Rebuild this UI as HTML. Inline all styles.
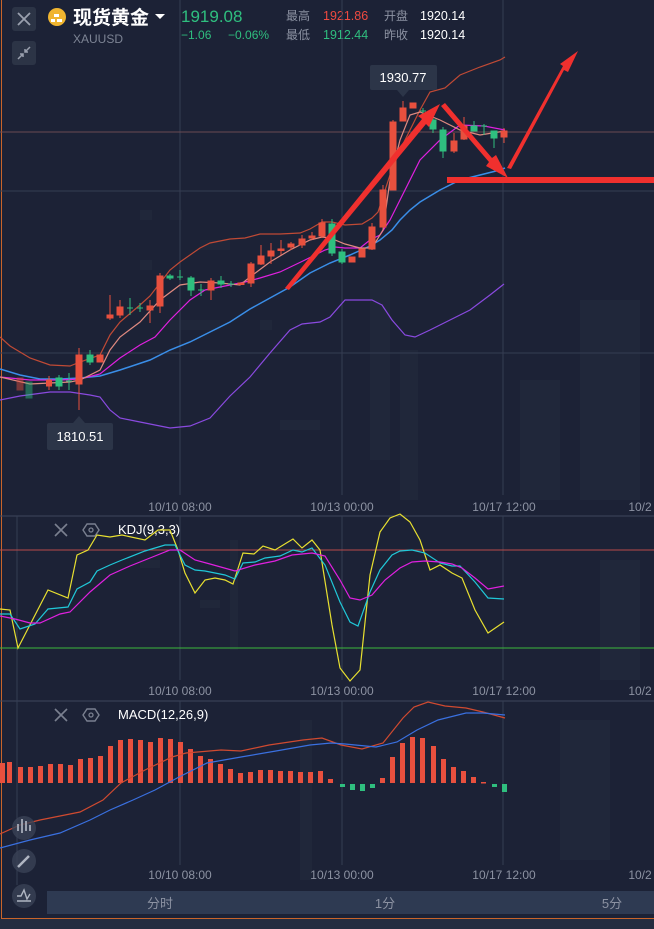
<!DOCTYPE html>
<html><head><meta charset="utf-8"><style>
html,body{margin:0;padding:0;background:#1c2236;}
body{width:654px;height:929px;overflow:hidden;position:relative;font-family:"Liberation Sans","Noto Sans CJK SC",sans-serif;}
svg{position:absolute;left:0;top:0}
</style></head><body>
<svg width="654" height="929" viewBox="0 0 654 929" xmlns="http://www.w3.org/2000/svg" font-family="Liberation Sans, Noto Sans CJK SC, sans-serif">
<rect width="654" height="929" fill="#1c2236"/>
<!-- faint background buildings -->
<g fill="#20273a">
<rect x="140" y="210" width="12" height="10"/><rect x="170" y="210" width="12" height="10"/><rect x="200" y="240" width="30" height="10"/><rect x="140" y="260" width="12" height="10"/><rect x="170" y="320" width="50" height="10"/><rect x="200" y="350" width="30" height="10"/><rect x="260" y="320" width="12" height="10"/><rect x="300" y="280" width="40" height="10"/><rect x="280" y="420" width="40" height="10"/><rect x="370" y="280" width="20" height="180"/><rect x="400" y="350" width="18" height="150"/><rect x="580" y="300" width="60" height="200"/><rect x="520" y="380" width="40" height="120"/>
<rect x="600" y="560" width="40" height="120"/><rect x="140" y="560" width="20" height="8"/><rect x="200" y="600" width="20" height="8"/><rect x="230" y="540" width="8" height="110"/><rect x="300" y="720" width="12" height="160"/><rect x="560" y="720" width="50" height="140"/>
</g>
<!-- orange frame -->
<line x1="1.5" y1="0" x2="1.5" y2="919" stroke="#c8642a" stroke-width="1"/>
<line x1="1" y1="918.5" x2="654" y2="918.5" stroke="#c8642a" stroke-width="1"/>
<rect x="0" y="919" width="654" height="10" fill="#242c40"/>

<!-- header -->
<rect x="12" y="7" width="24" height="24" rx="3" fill="#2c3446"/>
<path d="M18 13 L30 25 M30 13 L18 25" stroke="#9aa0ae" stroke-width="1.8"/>
<rect x="12" y="41" width="24" height="24" rx="3" fill="#2c3446"/>
<path d="M18 59 L23 54 M20 54 L23 54 L23 57 M30 47 L25 52 M25 49 L25 52 L28 52" stroke="#9aa0ae" stroke-width="1.5" fill="none"/>
<circle cx="57" cy="17" r="9" fill="#f0b530"/>
<path d="M51 19 h4 v3 h-4z M57 19 h5 v3 h-5z M54 14 h5 v3 h-5z" fill="#fff"/>
<text x="73" y="24" font-size="19" fill="#fff" font-weight="bold">现货黄金</text>
<path d="M155 14 L165 14 L160 19 Z" fill="#fff"/>
<text x="73" y="43" font-size="12" fill="#7d8494">XAUUSD</text>
<text x="181" y="22" font-size="17" fill="#2fbf7f">1919.08</text>
<text x="181" y="39" font-size="12" fill="#2fbf7f">−1.06</text>
<text x="228" y="39" font-size="12" fill="#2fbf7f">−0.06%</text>
<text x="286" y="20" font-size="12" fill="#8c92a2">最高</text>
<text x="286" y="39" font-size="12" fill="#8c92a2">最低</text>
<text x="323" y="20" font-size="12.5" fill="#f04a40">1921.86</text>
<text x="323" y="39" font-size="12.5" fill="#2fbf7f">1912.44</text>
<text x="384" y="20" font-size="12" fill="#8c92a2">开盘</text>
<text x="384" y="39" font-size="12" fill="#8c92a2">昨收</text>
<text x="420" y="20" font-size="12.5" fill="#fff">1920.14</text>
<text x="420" y="39" font-size="12.5" fill="#fff">1920.14</text>

<!-- main grid -->
<g stroke="#353d52" stroke-width="1">
<line x1="180" y1="0" x2="180" y2="495"/><line x1="342" y1="0" x2="342" y2="495"/><line x1="503" y1="0" x2="503" y2="495"/>
<line x1="0" y1="191" x2="654" y2="191"/><line x1="0" y1="353" x2="654" y2="353"/>
<line x1="0" y1="516" x2="654" y2="516" stroke="#3e475c"/>
<line x1="0" y1="701" x2="654" y2="701" stroke="#3e475c"/>
<line x1="17" y1="516" x2="17" y2="885"/><line x1="180" y1="516" x2="180" y2="680"/><line x1="342" y1="516" x2="342" y2="680"/><line x1="503" y1="516" x2="503" y2="680"/>
<line x1="180" y1="701" x2="180" y2="865"/><line x1="342" y1="701" x2="342" y2="865"/><line x1="503" y1="701" x2="503" y2="865"/>
</g>
<line x1="0" y1="132" x2="654" y2="132" stroke="#6a4a52" stroke-width="1"/>

<!-- main lines -->
<g fill="none" stroke-width="1.2">
<polyline stroke="#c04a35" points="0,337 10,346 30,358 50,365 70,366 80,362 100,355 110,335 120,322 140,305 150,296 160,283 170,270 180,262 200,248 210,243 230,239 245,238 260,234 280,234 300,233 310,229 322,222 332,222 345,225 362,224 372,218 378,212 390,175 400,150 410,130 420,110 430,92 445,88 460,75 480,67 500,60 505,57"/>
<polyline stroke="#8a4ae0" points="0,400 20,396 50,392 70,392 90,395 100,397 110,410 120,418 140,422 160,426 170,428 190,426 210,418 230,396 250,377 270,353 290,330 302,324 320,322 330,317 345,300 360,300 372,300 382,305 392,320 405,335 415,337 430,330 450,320 470,310 490,295 504,284"/>
<polyline stroke="#3a8ee8" stroke-width="1.5" points="0,369 20,375 40,379 60,379 80,378 100,376 120,370 150,360 170,350 190,342 210,332 230,322 250,309 270,298 290,287 310,273 330,263 350,255 370,246 380,240 392,230 400,220 410,210 420,202 440,190 460,180 480,175 500,170 505,168"/>
<polyline stroke="#e020e0" points="0,377 30,380 60,380 80,379 100,374 120,358 140,345 155,337 170,320 190,300 205,290 230,285 245,282 260,278 280,272 305,260 325,250 335,247 345,248 360,248 370,240 380,235 390,220 400,200 420,160 440,140 460,125 484,126 505,130"/>
<polyline stroke="#e08a80" points="0,377 30,384 50,383 70,382 80,380 100,370 110,350 120,337 140,322 160,300 180,285 200,282 220,283 240,285 250,277 270,262 290,250 310,240 322,237 330,238 345,244 360,248 372,248 383,230 390,180 400,140 410,115 420,112 440,120 460,130 480,135 505,131"/>
</g>

<!-- candles -->
<g stroke-width="1">
<g stroke="#e8503e" fill="#e8503e">
<rect x="17" y="378" width="6" height="12" opacity=".45"/>
<line x1="49" y1="376" x2="49" y2="390"/><rect x="46.5" y="380" width="5" height="6"/>
<line x1="79" y1="348" x2="79" y2="410"/><rect x="76" y="355" width="6" height="29"/>
<rect x="97" y="355" width="6" height="7"/>
<line x1="110" y1="295" x2="110" y2="320"/><rect x="107" y="315" width="6" height="3"/>
<line x1="120" y1="300" x2="120" y2="318"/><rect x="117" y="307" width="6" height="8"/>
<line x1="150" y1="300" x2="150" y2="323"/><rect x="147" y="306" width="6" height="4"/>
<line x1="160" y1="273" x2="160" y2="313"/><rect x="157" y="276" width="6" height="30"/>
<line x1="211" y1="278" x2="211" y2="300"/><rect x="208" y="281" width="6" height="9"/>
<rect x="238" y="283" width="6" height="1.5"/>
<line x1="251" y1="262" x2="251" y2="287"/><rect x="248" y="264" width="6" height="19"/>
<line x1="261" y1="245" x2="261" y2="265"/><rect x="258" y="256" width="6" height="8"/>
<line x1="271" y1="243" x2="271" y2="264"/><rect x="268" y="251" width="6" height="5"/>
<line x1="281" y1="240" x2="281" y2="255"/><rect x="278" y="249" width="6" height="1.5"/>
<line x1="291" y1="242" x2="291" y2="250"/><rect x="288" y="244" width="6" height="3"/>
<line x1="302" y1="235" x2="302" y2="248"/><rect x="299" y="239" width="6" height="6"/>
<line x1="312" y1="232" x2="312" y2="240"/><rect x="309" y="236" width="6" height="2"/>
<line x1="322" y1="219" x2="322" y2="238"/><rect x="319" y="223" width="6" height="13"/>
<rect x="349" y="257" width="6" height="5"/>
<rect x="359" y="249" width="6" height="8"/>
<line x1="372" y1="223" x2="372" y2="250"/><rect x="369" y="227" width="6" height="22"/>
<line x1="383" y1="185" x2="383" y2="228"/><rect x="380" y="190" width="6" height="37"/>
<line x1="393" y1="120" x2="393" y2="190"/><rect x="390" y="122" width="6" height="68"/>
<line x1="403" y1="101" x2="403" y2="121"/><rect x="400" y="108" width="6" height="13"/>
<rect x="410" y="103" width="6" height="5"/>
<line x1="454" y1="133" x2="454" y2="153"/><rect x="451" y="141" width="6" height="10"/>
<line x1="464" y1="117" x2="464" y2="140"/><rect x="461" y="126" width="6" height="13"/>
<line x1="504" y1="128" x2="504" y2="143"/><rect x="501" y="131" width="6" height="6"/>
</g>
<g stroke="#2fbf7f" fill="#2fbf7f">
<rect x="26" y="382" width="6" height="16" opacity=".45"/>
<line x1="59" y1="375" x2="59" y2="390"/><rect x="56" y="378" width="6" height="8"/>
<line x1="69" y1="373" x2="69" y2="390"/><line x1="66" y1="381" x2="72" y2="381"/>
<line x1="90" y1="350" x2="90" y2="365"/><rect x="87" y="355" width="6" height="7"/>
<line x1="130" y1="298" x2="130" y2="315"/><line x1="127" y1="308" x2="133" y2="308"/>
<line x1="140" y1="303" x2="140" y2="312"/><line x1="137" y1="308" x2="143" y2="308"/>
<line x1="170" y1="274" x2="170" y2="280"/><rect x="167" y="276" width="6" height="2"/>
<line x1="180" y1="270" x2="180" y2="280"/><line x1="177" y1="277" x2="183" y2="277"/>
<line x1="191" y1="276" x2="191" y2="296"/><rect x="188" y="278" width="6" height="12"/>
<line x1="201" y1="284" x2="201" y2="296"/><line x1="198" y1="290" x2="204" y2="290"/>
<line x1="221" y1="276" x2="221" y2="288"/><rect x="218" y="281" width="6" height="3"/>
<line x1="231" y1="281" x2="231" y2="287"/><line x1="228" y1="284" x2="234" y2="284"/>
<line x1="332" y1="219" x2="332" y2="256"/><rect x="329" y="224" width="6" height="29"/>
<line x1="342" y1="249" x2="342" y2="264"/><rect x="339" y="252" width="6" height="10"/>
<line x1="423" y1="108" x2="423" y2="118"/><line x1="420" y1="111" x2="426" y2="111"/>
<line x1="433" y1="117" x2="433" y2="133"/><rect x="430" y="120" width="6" height="9"/>
<line x1="443" y1="127" x2="443" y2="158"/><rect x="440" y="130" width="6" height="21"/>
<line x1="474" y1="121" x2="474" y2="131"/><rect x="471" y="126" width="6" height="5"/>
<line x1="484" y1="124" x2="484" y2="135"/><line x1="481" y1="126" x2="487" y2="126"/>
<line x1="494" y1="131" x2="494" y2="148"/><rect x="491" y="131" width="6" height="7"/>
</g>
</g>

<!-- arrows -->
<g fill="#f0302e" stroke="none">
<polygon points="285,288 289,290 426,124 429,127 440,104 418,116 422,119"/>
<polygon points="441,106 445,103 492,158 496,155 508,178 486,166 489,162"/>
<polygon points="507,168 511,169 564,70 568,72 578,51 560,64 563,66"/>
<rect x="447" y="177" width="207" height="6"/>
</g>

<!-- tooltips -->
<rect x="370" y="65" width="67" height="25" rx="2" fill="#2c3548"/>
<polygon points="397,90 409,90 403,97" fill="#2c3548"/>
<text x="403" y="82" font-size="13" fill="#fff" text-anchor="middle">1930.77</text>
<rect x="47" y="423" width="66" height="27" rx="2" fill="#2c3548"/>
<polygon points="73,423 85,423 79,416" fill="#2c3548"/>
<text x="80" y="441" font-size="13" fill="#fff" text-anchor="middle">1810.51</text>

<!-- time labels -->
<g font-size="12" fill="#8c92a2" text-anchor="middle">
<text x="180" y="511">10/10 08:00</text><text x="342" y="511">10/13 00:00</text><text x="504" y="511">10/17 12:00</text><text x="640" y="511">10/2</text>
<text x="180" y="695">10/10 08:00</text><text x="342" y="695">10/13 00:00</text><text x="504" y="695">10/17 12:00</text><text x="640" y="695">10/2</text>
<text x="180" y="879">10/10 08:00</text><text x="342" y="879">10/13 00:00</text><text x="504" y="879">10/17 12:00</text><text x="640" y="879">10/2</text>
</g>

<!-- KDJ -->
<line x1="0" y1="550" x2="654" y2="550" stroke="#b84a4a" stroke-width="1"/>
<line x1="0" y1="648" x2="654" y2="648" stroke="#3cb83c" stroke-width="1"/>
<path d="M55 524 L67 536 M67 524 L55 536" stroke="#7a8090" stroke-width="1.6"/>
<polygon points="87,524 95,524 99,530 95,536 87,536 83,530" fill="none" stroke="#7a8090" stroke-width="1.4"/><circle cx="91" cy="530" r="2" fill="none" stroke="#7a8090" stroke-width="1.3"/>
<text x="118" y="534" font-size="13" fill="#fff">KDJ(9,3,3)</text>
<g fill="none" stroke-width="1.2">
<polyline stroke="#e8e030" points="0,609 10,610 18,648 48,590 68,598 77,555 88,550 97,535 110,537 122,535 145,540 158,530 170,530 178,550 185,573 195,593 205,580 215,578 225,580 233,584 243,553 254,554 263,546 275,550 293,539 302,548 312,540 320,550 332,625 340,668 350,681 360,670 370,575 380,532 390,518 400,514 410,522 420,540 430,570 440,565 452,573 462,578 475,610 488,633 504,622"/>
<polyline stroke="#20c8d8" points="0,614 10,614 20,629 35,624 48,609 68,607 77,589 90,582 97,571 110,565 122,560 145,551 165,545 175,545 185,565 195,570 205,571 225,575 235,579 243,563 255,562 265,558 280,556 293,550 302,552 312,548 325,565 340,602 350,622 358,626 370,592 380,570 392,555 400,551 412,550 425,553 440,563 452,566 460,566 475,582 488,598 504,599"/>
<polyline stroke="#e020e0" points="0,616 15,619 30,623 40,623 60,614 70,612 90,592 110,575 130,566 150,558 170,550 180,550 195,560 210,564 235,571 255,565 275,561 292,555 312,553 325,556 340,580 350,598 360,600 372,595 385,580 400,568 412,562 425,561 440,562 452,564 462,568 475,578 488,589 504,586"/>
</g>

<!-- MACD -->
<path d="M55 709 L67 721 M67 709 L55 721" stroke="#7a8090" stroke-width="1.6"/>
<polygon points="87,709 95,709 99,715 95,721 87,721 83,715" fill="none" stroke="#7a8090" stroke-width="1.4"/><circle cx="91" cy="715" r="2" fill="none" stroke="#7a8090" stroke-width="1.3"/>
<text x="118" y="719" font-size="13" fill="#fff">MACD(12,26,9)</text>
<g fill="#e8503e">
<rect x="0" y="763" width="5" height="20"/><rect x="7" y="762" width="5" height="21"/><rect x="18" y="767" width="5" height="16"/><rect x="28" y="767" width="5" height="16"/><rect x="38" y="766" width="5" height="17"/><rect x="48" y="764" width="5" height="19"/><rect x="58" y="764" width="5" height="19"/><rect x="68" y="765" width="5" height="18"/><rect x="78" y="759" width="5" height="24"/><rect x="88" y="758" width="5" height="25"/><rect x="98" y="756" width="5" height="27"/><rect x="108" y="746" width="5" height="37"/><rect x="118" y="740" width="5" height="43"/><rect x="128" y="739" width="5" height="44"/><rect x="138" y="740" width="5" height="43"/><rect x="148" y="742" width="5" height="41"/><rect x="158" y="738" width="5" height="45"/><rect x="168" y="739" width="5" height="44"/><rect x="178" y="742" width="5" height="41"/><rect x="188" y="749" width="5" height="34"/><rect x="198" y="756" width="5" height="27"/><rect x="208" y="759" width="5" height="24"/><rect x="218" y="764" width="5" height="19"/><rect x="228" y="769" width="5" height="14"/><rect x="238" y="773" width="5" height="10"/><rect x="248" y="772" width="5" height="11"/><rect x="258" y="770" width="5" height="13"/><rect x="268" y="770" width="5" height="13"/><rect x="278" y="771" width="5" height="12"/><rect x="288" y="771" width="5" height="12"/><rect x="298" y="772" width="5" height="11"/><rect x="308" y="772" width="5" height="11"/><rect x="318" y="771" width="5" height="12"/><rect x="328" y="779" width="5" height="4"/>
<rect x="380" y="778" width="5" height="5"/><rect x="390" y="757" width="5" height="26"/><rect x="400" y="743" width="5" height="40"/><rect x="410" y="737" width="5" height="46"/><rect x="420" y="738" width="5" height="45"/><rect x="431" y="746" width="5" height="37"/><rect x="441" y="759" width="5" height="24"/><rect x="451" y="767" width="5" height="16"/><rect x="461" y="771" width="5" height="12"/><rect x="471" y="777" width="5" height="6"/><rect x="481" y="782" width="5" height="1.5"/>
</g>
<g fill="#2fbf7f">
<rect x="340" y="784" width="5" height="3"/><rect x="350" y="784" width="5" height="6"/><rect x="360" y="784" width="5" height="7"/><rect x="370" y="784" width="5" height="4"/><rect x="492" y="784" width="5" height="3"/><rect x="502" y="784" width="5" height="8"/>
</g>
<g fill="none" stroke-width="1.2">
<polyline stroke="#d04a30" points="0,834 20,825 40,820 60,816 80,812 103,800 121,783 145,770 172,757 186,753 221,750 241,751 269,745 303,740 322,738 341,745 362,749 383,743 403,718 414,707 428,702 445,706 466,708 483,712 505,718"/>
<polyline stroke="#3a70e0" points="0,848 30,840 60,833 90,820 110,810 133,800 155,790 179,777 207,763 241,757 276,751 310,745 331,743 345,744 376,747 397,742 417,730 438,720 466,713 483,713 505,715"/>
</g>

<!-- left tool circles -->
<circle cx="24" cy="828" r="12" fill="#3a4256" opacity=".8"/>
<g fill="#9aa0ae"><rect x="17" y="824" width="2" height="7"/><rect x="21" y="819" width="2" height="14"/><rect x="25" y="821" width="2" height="10"/><rect x="29" y="825" width="2" height="6"/></g>
<circle cx="24" cy="861" r="12" fill="#3a4256" opacity=".8"/>
<path d="M18 867 L29 856" stroke="#b0b6c2" stroke-width="2.5"/>
<circle cx="24" cy="896" r="12" fill="#3a4256" opacity=".8"/>
<path d="M17 896 L21 896 L24 890 L27 899 L30 894 M17 901 L31 901" stroke="#b0b6c2" stroke-width="1.4" fill="none"/>

<!-- bottom tabs -->
<rect x="47" y="891" width="607" height="23" fill="#2e3a52"/>
<g font-size="13" fill="#8c92a2" text-anchor="middle">
<text x="160" y="908">分时</text><text x="385" y="908">1分</text><text x="612" y="908">5分</text>
</g>
</svg>
</body></html>
